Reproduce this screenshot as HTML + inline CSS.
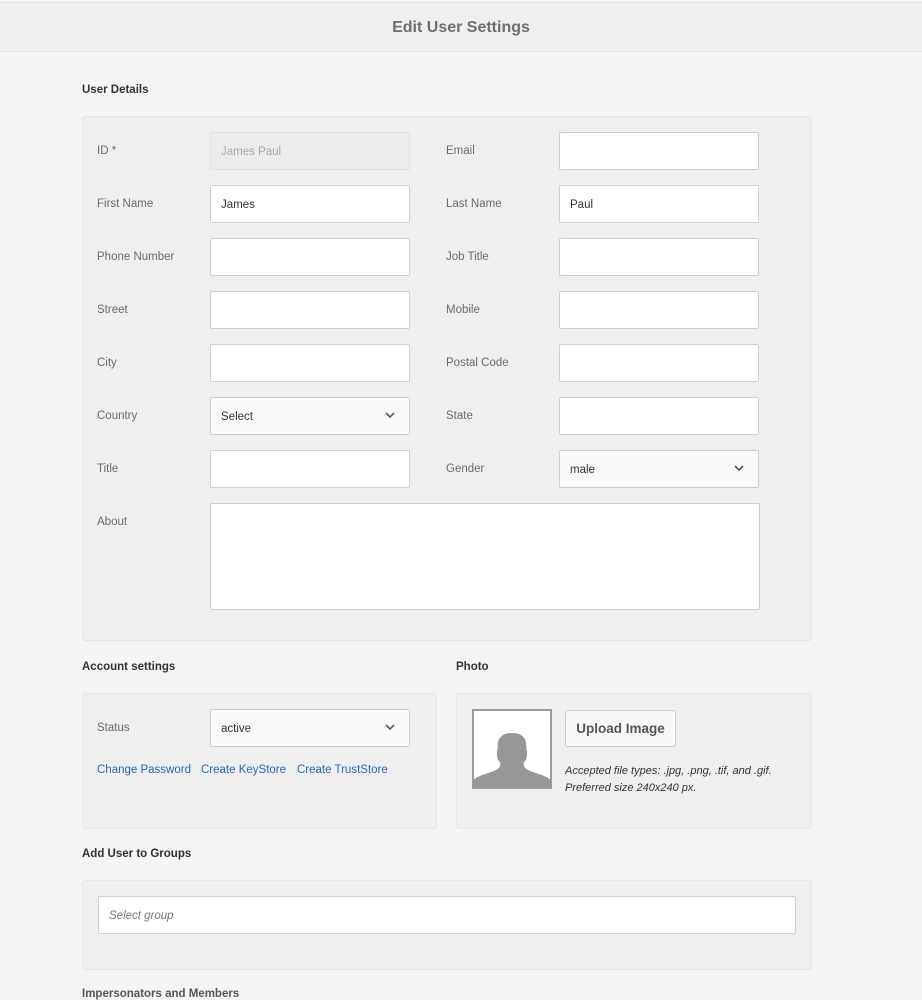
<!DOCTYPE html>
<html><head><style>
*{box-sizing:border-box;margin:0;padding:0}
body{width:922px;height:992px;background:#f5f5f5;font-family:"Liberation Sans",sans-serif;position:relative;overflow:hidden;color:#4b4b4b}
.a{position:absolute}
.hdr{left:0;top:2px;width:922px;height:50px;background:#efefef;border-top:1px solid #e2e2e2;border-bottom:1px solid #dedede;text-align:center;line-height:50px;font-size:16px;font-weight:bold;color:#6e6e6e}
.h{font-size:11.5px;font-weight:bold;color:#323232}
.panel{background:#efefef;border:1px solid #e6e6e6;border-radius:3px}
.lbl{font-size:11.5px;color:#6a6a6a}
.in{background:#fff;border:1px solid #cfcfcf;border-radius:2px;width:200px;height:38px;font-size:11.5px;color:#333;padding-left:10px;line-height:38px}
.dis{background:#ececec;border-color:#e0e0e0;color:#aaa}
.sel{background:#fafafa}
.sel svg{position:absolute;right:14px;top:14px}
.lnk{font-size:11.5px;color:#2d63bd}
</style></head><body>
<div class="a hdr">Edit User Settings</div>
<div class="a h" style="left:82px;top:84px">User Details</div>
<div class="a panel" style="left:82px;top:116px;width:730px;height:525px"></div>

<div class="a lbl" style="left:97px;top:145px">ID *</div>
<div class="a in dis" style="left:210px;top:132px">James Paul</div>
<div class="a lbl" style="left:446px;top:145px">Email</div>
<div class="a in" style="left:559px;top:132px"></div>

<div class="a lbl" style="left:97px;top:198px">First Name</div>
<div class="a in" style="left:210px;top:185px">James</div>
<div class="a lbl" style="left:446px;top:198px">Last Name</div>
<div class="a in" style="left:559px;top:185px">Paul</div>

<div class="a lbl" style="left:97px;top:251px">Phone Number</div>
<div class="a in" style="left:210px;top:238px"></div>
<div class="a lbl" style="left:446px;top:251px">Job Title</div>
<div class="a in" style="left:559px;top:238px"></div>

<div class="a lbl" style="left:97px;top:304px">Street</div>
<div class="a in" style="left:210px;top:291px"></div>
<div class="a lbl" style="left:446px;top:304px">Mobile</div>
<div class="a in" style="left:559px;top:291px"></div>

<div class="a lbl" style="left:97px;top:357px">City</div>
<div class="a in" style="left:210px;top:344px"></div>
<div class="a lbl" style="left:446px;top:357px">Postal Code</div>
<div class="a in" style="left:559px;top:344px"></div>

<div class="a lbl" style="left:97px;top:410px">Country</div>
<div class="a in sel" style="left:210px;top:397px">Select<svg width="10" height="7" viewBox="0 0 10 7"><path d="M1 1l4 4 4-4" fill="none" stroke="#444" stroke-width="1.5"/></svg></div>
<div class="a lbl" style="left:446px;top:410px">State</div>
<div class="a in" style="left:559px;top:397px"></div>

<div class="a lbl" style="left:97px;top:463px">Title</div>
<div class="a in" style="left:210px;top:450px"></div>
<div class="a lbl" style="left:446px;top:463px">Gender</div>
<div class="a in sel" style="left:559px;top:450px">male<svg width="10" height="7" viewBox="0 0 10 7"><path d="M1 1l4 4 4-4" fill="none" stroke="#444" stroke-width="1.5"/></svg></div>

<div class="a lbl" style="left:97px;top:516px">About</div>
<div class="a in" style="left:210px;top:503px;width:550px;height:107px"></div>

<div class="a h" style="left:82px;top:661px">Account settings</div>
<div class="a h" style="left:456px;top:661px">Photo</div>
<div class="a panel" style="left:82px;top:693px;width:355px;height:136px"></div>
<div class="a lbl" style="left:97px;top:722px">Status</div>
<div class="a in sel" style="left:210px;top:709px">active<svg width="10" height="7" viewBox="0 0 10 7"><path d="M1 1l4 4 4-4" fill="none" stroke="#444" stroke-width="1.5"/></svg></div>
<div class="a lnk" style="left:97px;top:764px">Change Password</div>
<div class="a lnk" style="left:201px;top:764px">Create KeyStore</div>
<div class="a lnk" style="left:297px;top:764px">Create TrustStore</div>

<div class="a panel" style="left:456px;top:693px;width:356px;height:136px"></div>
<svg class="a" style="left:472px;top:709px" width="80" height="80" viewBox="0 0 80 80">
<rect x="0" y="0" width="80" height="80" fill="#999"/><rect x="2" y="2" width="76" height="76" fill="#fff"/>
<path d="M2 78V70c6-4 16-6 22-9 4-2 5-5 4-8-3-2-3-6-3-8 0-3 0-4 1-5-1-6 0-16 14-16 14 0 15 10 14 16 1 1 1 2 1 5 0 2 0 6-3 8-1 3 0 6 4 8 6 3 16 5 22 9v8z" fill="#979797"/></svg>
<div class="a" style="left:565px;top:710px;width:111px;height:37px;border:1px solid #cacaca;border-radius:3px;background:#f8f8f8;font-size:13.5px;font-weight:bold;color:#555;text-align:center;line-height:35px">Upload Image</div>
<div class="a" style="left:565px;top:763px;font-size:11px;font-style:italic;color:#333;line-height:17px">Accepted file types: .jpg, .png, .tif, and .gif.<br>Preferred size 240x240 px.</div>

<div class="a h" style="left:82px;top:848px">Add User to Groups</div>
<div class="a panel" style="left:82px;top:880px;width:730px;height:90px"></div>
<div class="a in" style="left:98px;top:896px;width:698px;font-style:italic;color:#777">Select group</div>
<div class="a h" style="left:82px;top:988px;color:#555">Impersonators and Members</div>
</body></html>
